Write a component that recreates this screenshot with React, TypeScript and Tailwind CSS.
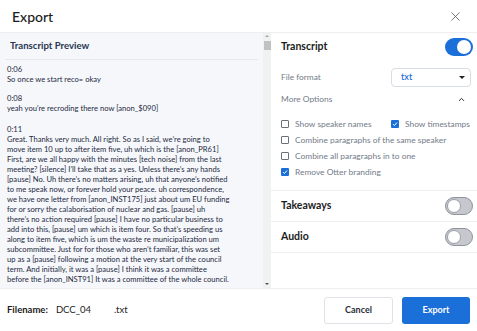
import { X, ChevronUp } from 'lucide-react';

const lines = [
  'Great. Thanks very much. All right. So as I said, we\u2019re going to',
  'move item 10 up to after item five, uh which is the [anon_PR61]',
  'First, are we all happy with the minutes [tech noise] from the last',
  'meeting? [silence] I\u2019ll take that as a yes. Unless there\u2019s any hands',
  '[pause] No. Uh there\u2019s no matters arising, uh that anyone\u2019s notified',
  'to me speak now, or forever hold your peace. uh correspondence,',
  'we have one letter from [anon_INST175] just about um EU funding',
  'for or sorry the calaborisation of nuclear and gas. [pause] uh',
  'there\u2019s no action required [pause] I have no particular business to',
  'add into this, [pause] um which is item four. So that\u2019s speeding us',
  'along to item five, which is um the waste re municipalization um',
  'subcommittee. Just for for those who aren\u2019t familiar, this was set',
  'up as a [pause] following a motion at the very start of the council',
  'term. And initially, it was a [pause] I think it was a committee',
  'before the [anon_INST91] It was a committee of the whole council.',
];

function Toggle({ on }: { on: boolean }) {
  if (on) {
    return (
      <div className="flex h-[18px] w-[28px] items-center justify-end rounded-full bg-[#1b6fd8] pr-[2px]">
        <div className="h-[14px] w-[14px] rounded-full bg-white" />
      </div>
    );
  }
  return (
    <div className="flex h-[18px] w-[28px] items-center rounded-full border border-[#8f949c] bg-[#c6c8cd] pl-[1px]">
      <div className="h-[14px] w-[14px] rounded-full border border-[#9ca0a8] bg-white" />
    </div>
  );
}

function Check({ on, label }: { on: boolean; label: string }) {
  return (
    <div className="flex items-center gap-[6px] whitespace-nowrap">
      {on ? (
        <div className="flex h-[8px] w-[8px] shrink-0 items-center justify-center rounded-[1px] bg-[#1b6fd8]">
          <svg width="6" height="6" viewBox="0 0 6 6" fill="none">
            <path d="M1 3.1 2.4 4.5 5 1.5" stroke="white" strokeWidth="1" />
          </svg>
        </div>
      ) : (
        <div className="h-[8px] w-[8px] shrink-0 rounded-[1px] border border-[#6b6f76] bg-white" />
      )}
      <span className="text-[8.4px] text-[#737b88]">{label}</span>
    </div>
  );
}

export default function App() {
  return (
    <div className="flex h-[331px] w-[477px] flex-col bg-white font-['Lato',sans-serif] text-[#1f2a40]">
      <div className="flex h-[33px] items-center justify-between border-b border-[#eceef2] pl-[12px] pr-[14px]">
        <h1 className="text-[14px] font-medium text-[#1c1c1c]">Export</h1>
        <X size={15} strokeWidth={1.3} className="text-[#555b63]" />
      </div>

      <div className="flex h-[256px] border-b border-[#eceef2]">
        <div className="w-[263px] shrink-0 overflow-hidden bg-[#f5f7fb]">
          <div className="mx-[5px] border-b border-[#e6e9ef] pb-[6px] pl-[5px] pt-[6px] text-[9.6px] font-bold text-[#283650]">
            Transcript Preview
          </div>
          <div className="pl-[7px] pt-[4px] text-[7.6px] leading-[10px] text-[#1f2a40]">
            <div>0:06</div>
            <div>So once we start reco= okay</div>
            <div className="mt-[9px]">0:08</div>
            <div>yeah you&apos;re recroding there now [anon_$090]</div>
            <div className="mt-[11px]">0:11</div>
            {lines.map((l) => (
              <div key={l} className="whitespace-nowrap">
                {l}
              </div>
            ))}
          </div>
        </div>

        <div className="flex w-[8px] shrink-0 flex-col items-center bg-[#f1f1f1]">
          <div className="mt-[2px] h-0 w-0 border-x-[2px] border-b-[2px] border-x-transparent border-b-[#a3a3a3]" />
          <div className="mt-[4px] h-[9px] w-[7px] bg-[#c1c1c1]" />
          <div className="flex-1" />
          <div className="mb-[3px] h-0 w-0 border-x-[2px] border-t-[2px] border-x-transparent border-t-[#505050]" />
        </div>

        <div className="flex min-w-0 flex-1 flex-col">
          <div className="pl-[10px] pr-[4px]">
            <div className="flex h-[28px] items-center justify-between">
              <span className="text-[10.5px] font-bold text-[#1c1c1c]">Transcript</span>
              <Toggle on />
            </div>
            <div className="mt-[6px] flex h-[20px] items-center justify-between">
              <span className="text-[8.4px] text-[#737b88]">File format</span>
              <div className="mr-[2px] flex h-[19px] w-[80px] items-center justify-between rounded-[4px] border border-[#d8dce3] pl-[9px] pr-[5px]">
                <span className="text-[9px] font-semibold text-[#1b6fd8]">txt</span>
                <div className="h-0 w-0 border-x-[3px] border-t-[3px] border-x-transparent border-t-[#222]" />
              </div>
            </div>
            <div className="mt-[4px] flex h-[16px] items-center justify-between">
              <span className="text-[8.4px] text-[#737b88]">More Options</span>
              <ChevronUp size={9} strokeWidth={2.5} className="mr-[7px] text-[#222]" />
            </div>
            <div className="mt-[9px] flex h-[16px] items-center">
              <div className="w-[110px] shrink-0">
                <Check on={false} label="Show speaker names" />
              </div>
              <Check on label="Show timestamps" />
            </div>
            <div className="flex h-[16px] items-center">
              <Check on={false} label="Combine paragraphs of the same speaker" />
            </div>
            <div className="flex h-[16px] items-center">
              <Check on={false} label="Combine all paragraphs in to one" />
            </div>
            <div className="flex h-[16px] items-center">
              <Check on label="Remove Otter branding" />
            </div>
          </div>
          <div className="mt-[10px] flex h-[32px] items-center justify-between border-y border-[#eceef2] pl-[10px] pr-[4px]">
            <span className="text-[10.5px] font-bold text-[#1c1c1c]">Takeaways</span>
            <Toggle on={false} />
          </div>
          <div className="flex h-[31px] items-center justify-between border-b border-[#eceef2] pl-[10px] pr-[4px]">
            <span className="text-[10.5px] font-bold text-[#1c1c1c]">Audio</span>
            <Toggle on={false} />
          </div>
        </div>
      </div>

      <div className="flex flex-1 items-center justify-between pl-[7px] pr-[7px]">
        <div className="flex items-center text-[9.5px] text-[#1c1c1c]">
          <span className="font-bold">Filename:</span>
          <span className="ml-[8px] w-[58px]">DCC_04</span>
          <span>.txt</span>
        </div>
        <div className="flex gap-[9px]">
          <button className="h-[27px] w-[69px] rounded-[3px] border border-[#dfe2e7] bg-white text-[9px] font-bold text-[#2a2f38]">
            Cancel
          </button>
          <button className="h-[27px] w-[68px] rounded-[3px] bg-[#1b6fd8] text-[9px] font-bold text-white">
            Export
          </button>
        </div>
      </div>
    </div>
  );
}
